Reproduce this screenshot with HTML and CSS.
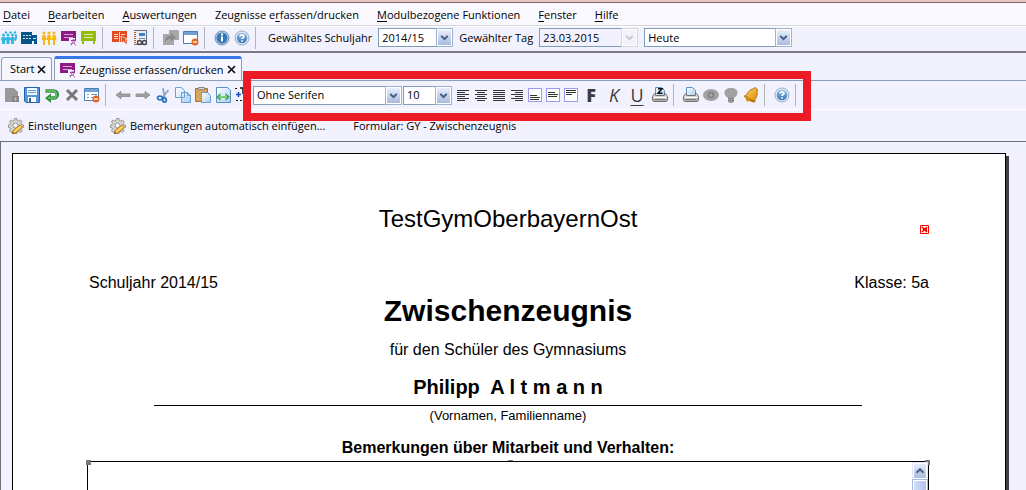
FILE: index.html
```html
<!DOCTYPE html>
<html lang="de">
<head>
<meta charset="utf-8">
<title>Zeugnisse erfassen/drucken</title>
<link rel="stylesheet" href="styles.css">
</head>
<body>
<svg class="defs" aria-hidden="true">
  <defs>
    <linearGradient id="orb" x1="0" y1="0" x2="0" y2="1"><stop offset="0" stop-color="#8db9e2"/><stop offset="1" stop-color="#3c78b8"/></linearGradient>
    <linearGradient id="gold" x1="0" y1="0" x2="1" y2="1"><stop offset="0" stop-color="#ffe070"/><stop offset="1" stop-color="#d88400"/></linearGradient>
    <linearGradient id="paper" x1="0" y1="0" x2="1" y2="1"><stop offset="0" stop-color="#fff"/><stop offset="1" stop-color="#a9cff2"/></linearGradient>
    <linearGradient id="casing" x1="0" y1="0" x2="0" y2="1"><stop offset="0" stop-color="#f2f2f2"/><stop offset="1" stop-color="#a8a8a8"/></linearGradient>
    <symbol id="people" viewBox="0 0 16 16"><circle cx="3" cy="3" r="1.500"/><circle cx="8" cy="3" r="1.500"/><circle cx="13" cy="3" r="1.500"/><path d="M1.500 5h3l1 5H4v5H2v-5H.5zM6.500 5h3l1 5H9v5H7v-5H5.500zM11.500 5h3l1 5H14v5h-2v-5h-1.500z"/></symbol>
    <symbol id="pupils" viewBox="0 0 16 16"><circle cx="2.500" cy="5" r="1.500"/><circle cx="7" cy="5" r="1.500"/><circle cx="11.500" cy="5" r="1.500"/><circle cx="5" cy="2.500" r="1.200"/><circle cx="9.500" cy="2.500" r="1.200"/><circle cx="14" cy="2.500" r="1.200"/><path d="M1 7h3l1 2-1 2v3H1v-3L0 9zM5.500 7h3l1 2-1 2v3h-3v-3l-1-2zM10 7h3l1 2-1 2v3h-3v-3L9 9zM13.500 4.500H16V8l-1 3h-1V7z"/></symbol>
    <symbol id="board" viewBox="0 0 16 16"><path fill="#8d1a85" d="M0 1h15v10H0z"/><path stroke="#d9a5d5" d="M3 4.500h9M3 7.500h9"/><path stroke="#f2f2ff" stroke-width="2" fill="none" d="M9 12V9h5"/><g fill="none" stroke="#b463ad"><circle cx="12.500" cy="11" r="1.500"/><path d="M11.500 12.500l-1.500 3M13 12.500l1.500 3M9.500 13.500h3"/></g></symbol>
    <symbol id="window" viewBox="0 0 16 16"><path fill="#fff" stroke="#4a7fb5" d="M.5 1.500h14v12H.5z"/><path fill="#6fa3d5" d="M1 2h13v3H1z"/></symbol>
    <symbol id="minus" viewBox="0 0 16 16"><circle cx="12" cy="12" r="3.500" fill="#e6651c"/><path stroke="#fff" stroke-width="1.400" d="M10 12h4"/></symbol>
    <symbol id="help" viewBox="0 0 16 16"><circle cx="8" cy="8" r="7" fill="#e1ebf6" stroke="#98acc5"/><circle cx="8" cy="8" r="5.300" fill="url(#orb)"/><path fill="none" stroke="#fff" stroke-width="1.700" d="M6 6.500c0-2.200 4-2.200 4-.2 0 1.300-2 1.200-2 2.700M8 10.300v1.500"/></symbol>
    <symbol id="printer" viewBox="0 0 16 16"><path fill="url(#paper)" stroke="#6290bd" d="M3.500 8V.5h6l3 3V8"/><path fill="url(#casing)" stroke="#707070" d="M2.500 6.500h1v2h9v-2h1l2 3v4l-1 1h-13l-1-1v-4z"/><path stroke="#fff" d="M2 10.500h12"/><path stroke="#777" d="M2.500 12.500h11"/></symbol>
    <symbol id="gear" viewBox="0 0 16 16"><path fill="#d4d4ce" stroke="#8d8d86" stroke-width=".9" d="M6.500.5h2.500l.4 2 1.300.6 1.700-1.200 1.700 1.700-1.200 1.700.6 1.300 2 .4v2.400l-2 .4-.6 1.300 1.200 1.700-1.700 1.700-1.700-1.200-1.300.6-.4 1.600H6.500l-.4-1.600-1.300-.6-1.700 1.200-1.700-1.700 1.200-1.700L2 9.800l-1.700-.4V7L2 6.600l.6-1.300-1.200-1.700 1.700-1.700 1.700 1.200 1.300-.6z"/><circle cx="7.500" cy="7.500" r="2.500" fill="#f2f2ff" stroke="#8d8d86" stroke-width=".9"/><path fill="#ffd15a" stroke="#a8651a" stroke-width=".9" d="M4.500 15.500l.8-3.200 6.700-5.300 2.300 2.500-6.600 5.400z"/><path fill="#e8a79a" d="M12 6.800l1.200-.9 2.300 2.500-1.200 1z"/><path fill="#4a3010" d="M4.300 15.700l.4-1.700 1.400 1.400z"/></symbol>
    <symbol id="down" viewBox="0 0 16 18"><path fill="none" stroke="currentColor" stroke-width="2.500" d="M4 7l4 4 4-4"/></symbol>
    <symbol id="close" viewBox="0 0 9 9"><path stroke="#111" stroke-width="1.700" d="M1 1l7 7M8 1L1 8"/></symbol>
  </defs>
</svg>

<div class="title-edge"></div>
<nav class="menu">
  <button><u>D</u>atei</button>
  <button><u>B</u>earbeiten</button>
  <button><u>A</u>uswertungen</button>
  <button>Zeugnisse e<u>r</u>fassen/drucken</button>
  <button><u>M</u>odulbezogene Funktionen</button>
  <button><u>F</u>enster</button>
  <button><u>H</u>ilfe</button>
</nav>

<div class="toolbar main-tools">
  <button class="icon" aria-label="Schüler"><svg viewBox="0 0 16 16" fill="#35b8e0"><use href="#pupils"/></svg></button>
  <button class="icon" aria-label="Schule"><svg viewBox="0 0 16 16"><path fill="#075489" d="M0 2h11v3h5v9h-3v-3h-2v3H0z"/><path stroke="#cfe0ee" stroke-dasharray="2 1" d="M2 5.500h8M2 8.500h8"/><path stroke="#cfe0ee" d="M12 8.500h3"/></svg></button>
  <button class="icon" aria-label="Klassen"><svg viewBox="0 0 16 16" fill="#f6b914"><use href="#people"/></svg></button>
  <button class="icon" aria-label="Zeugnisse"><svg><use href="#board"/></svg></button>
  <button class="icon" aria-label="Notizen"><svg viewBox="0 0 16 16"><path fill="#94bd0b" d="M0 1h15v10h-1v3h-2v-3H3v3H1v-3H0z"/><path stroke="#dcebaa" d="M3 4.500h9M3 7.500h9"/></svg></button>
  <span class="sep"></span>
  <button class="icon" aria-label="Buch"><svg viewBox="0 0 16 16"><path fill="#e34a20" d="M0 1h15v11H0z"/><path stroke="#ffd2c1" d="M2 4.500h4M2 6.500h4M2 8.500h4M9 4.500h4M7.500 2v10"/><path fill="#e34a20" stroke="#fff" stroke-width=".7" d="M9 6l6 3-2 1 2.500 3-1.500 1.500-2.500-3-1.500 2z"/></svg></button>
  <button class="icon" aria-label="Adressbuch"><svg viewBox="0 0 16 16"><path fill="#e9eef4" stroke="#637180" d="M3.500.5h11v14h-11z"/><path stroke="#c65b28" stroke-width="2" d="M3 0v15"/><path stroke="#eee" stroke-dasharray="1 1" stroke-width="3" d="M2.500 1v14"/><path fill="#3d83c8" d="M7 3h6v3H7z"/><path stroke="#6f8fac" d="M7 8.500h6"/><g fill="none" stroke="#444" stroke-width="1.300"><circle cx="7.500" cy="12.500" r="2"/><circle cx="12.500" cy="12.500" r="2"/></g></svg></button>
  <span class="sep"></span>
  <button class="icon" aria-label="Übernehmen" disabled><svg viewBox="0 0 16 16"><path fill="#a8a8a8" d="M6 0h9l1 1v9h-5v5H0V4h6z"/><path fill="#8a8a8a" d="M2 12c0-5 2-6 6-6V3l5 4.500-5 4V9c-3 0-4 1-6 3z"/></svg></button>
  <button class="icon" aria-label="Fenster schließen"><svg><use href="#window"/><use href="#minus"/></svg></button>
  <span class="sep"></span>
  <button class="icon" aria-label="Info"><svg viewBox="0 0 16 16"><circle cx="8" cy="8" r="7" fill="#b9cee4" stroke="#7090b4"/><circle cx="8" cy="8" r="5.500" fill="#3976b5"/><path stroke="#fff" stroke-width="2" d="M8 3.500v2M8 6.500v5"/></svg></button>
  <button class="icon" aria-label="Hilfe"><svg><use href="#help"/></svg></button>
  <span class="sep"></span>
  <div class="filters">
    <label for="year">Gewähltes Schuljahr</label>
    <span class="combo year"><select id="year"><option>2014/15</option></select><svg><use href="#down"/></svg></span>
    <label for="day">Gewählter Tag</label>
    <span class="combo day off"><input id="day" type="text" value="23.03.2015"><svg><use href="#down"/></svg></span>
    <span class="combo period"><select aria-label="Zeitraum"><option>Heute</option></select><svg><use href="#down"/></svg></span>
  </div>
</div>

<div class="tabs">
  <div class="tab">Start<button aria-label="Start schließen"><svg><use href="#close"/></svg></button></div>
  <div class="tab active"><svg class="tab-icon"><use href="#board"/></svg>Zeugnisse erfassen/drucken<button aria-label="Zeugnisse schließen"><svg><use href="#close"/></svg></button></div>
</div>

<div class="toolbar edit-tools">
  <button class="icon" aria-label="Neu" disabled><svg viewBox="0 0 16 16"><path fill="#999" d="M1 1h9l4 4v10H1z"/><path fill="#858585" d="M8 9h7v6H8z"/><path stroke="#bbb" d="M11.500 10v4M9.500 12h4"/></svg></button>
  <button class="icon" aria-label="Speichern"><svg viewBox="0 0 16 16"><path fill="#5796d6" stroke="#2764a8" d="M.5.5h15v15H2l-1.500-1.500z"/><path fill="#eef6ff" d="M3 1h10v7H3z"/><path stroke="#70a2d0" d="M4 3.500h8M4 5.500h8"/><path fill="#fff" d="M4 10h8v5H4z"/><path fill="#2764a8" d="M5 11h2v4H5z"/></svg></button>
  <button class="icon" aria-label="Rückgängig"><svg viewBox="0 0 16 16"><path fill="none" stroke="#2f8f40" stroke-width="3.600" d="M1.500 4h8c5 0 5 7 0 7H6"/><path fill="#2f8f40" d="M7 6.500V16l-6-5z"/><path fill="none" stroke="#6cbf70" stroke-width="1.600" d="M2.500 4h7c3.700 0 3.700 7 0 7H4"/></svg></button>
  <button class="icon" aria-label="Löschen"><svg viewBox="0 0 16 16"><path stroke="#777" stroke-width="3" d="M3 3l10 10M13 3L3 13"/></svg></button>
  <button class="icon" aria-label="Formular schließen"><svg viewBox="0 0 16 16"><use href="#window"/><path stroke="#5e95c8" d="M3 7.500h2M7 7.500h6M3 10.500h2M7 10.500h3"/><use href="#minus"/></svg></button>
  <span class="sep"></span>
  <button class="icon" aria-label="Zurück"><svg viewBox="0 0 16 16"><path fill="#a0a0a0" stroke="#888" stroke-width=".8" d="M1 8l5-3.500V7h9v2.500H6v2.300z"/></svg></button>
  <button class="icon" aria-label="Vor"><svg viewBox="0 0 16 16"><path fill="#a0a0a0" stroke="#888" stroke-width=".8" d="M15 8l-5-3.500V7H1v2.500h9v2.300z"/></svg></button>
  <button class="icon" aria-label="Ausschneiden"><svg viewBox="0 0 16 16"><path stroke="#8aa6c4" stroke-width="1.800" d="M8 1l1.500 9M13.500 3L7 11"/><g fill="none" stroke="#2c78c3" stroke-width="1.800"><ellipse cx="5" cy="11" rx="2.500" ry="1.800"/><ellipse cx="9.500" cy="13" rx="1.800" ry="2"/></g></svg></button>
  <button class="icon" aria-label="Kopieren"><svg viewBox="0 0 16 16"><path fill="url(#paper)" stroke="#6aa0d6" d="M.5.500h6l3 3v7h-9zM6.500 5.500h6l3 3v7h-9z"/><path fill="none" stroke="#6aa0d6" d="M12.500 5.500v3h3"/></svg></button>
  <button class="icon" aria-label="Einfügen"><svg viewBox="0 0 16 16"><path fill="#d9a45a" stroke="#a8703a" d="M.5 1.500h12v13H.5z"/><path fill="#ddd" stroke="#888" d="M3.500.5h6v2h-6z"/><path fill="url(#paper)" stroke="#6aa0d6" d="M6.500 5.500h6l3 3v7h-9z"/></svg></button>
  <button class="icon" aria-label="Seitenbreite"><svg viewBox="0 0 16 16"><path fill="url(#paper)" stroke="#598fc6" d="M1.500.5h11l3 3v12h-14z"/><path fill="#49a952" d="M1 10l4.500-4v3h5V6L15 10l-4.500 4v-3h-5v3z"/><path stroke="#b5eab5" d="M4 10h8"/></svg></button>
  <button class="icon" aria-label="Textfeld"><svg viewBox="0 0 16 16"><path stroke="#111" stroke-dasharray="2 2" d="M0 1.500h4M1 13.500h14"/><path stroke="#174cc2" stroke-width="1.500" d="M1 7.500h5M3.500 5v5"/><path stroke="#111" stroke-width="1.500" d="M5 1h6M8 1v6"/></svg></button>
  <div class="format">
    <span class="combo font"><select aria-label="Schriftart"><option>Ohne Serifen</option></select><svg><use href="#down"/></svg></span>
    <span class="combo size"><select aria-label="Schriftgröße"><option>10</option></select><svg><use href="#down"/></svg></span>
    <div class="aligns">
      <button aria-label="Linksbündig"><svg viewBox="0 0 14 14"><path d="M1 2.500h12M1 4.500h8M1 6.500h12M1 8.500h8M1 10.500h12M1 12.500h8"/></svg></button>
      <button aria-label="Zentriert"><svg viewBox="0 0 14 14"><path d="M1 2.500h12M3 4.500h8M1 6.500h12M3 8.500h8M1 10.500h12M3 12.500h8"/></svg></button>
      <button aria-label="Blocksatz"><svg viewBox="0 0 14 14"><path d="M1 2.500h12M1 4.500h12M1 6.500h12M1 8.500h12M1 10.500h12M1 12.500h12"/></svg></button>
      <button aria-label="Rechtsbündig"><svg viewBox="0 0 14 14"><path d="M1 2.500h12M5 4.500h8M1 6.500h12M5 8.500h8M1 10.500h12M5 12.500h8"/></svg></button>
      <button class="boxed" aria-label="Unten"><svg viewBox="0 0 14 14"><path d="M2 7.500h7M2 9.500h10M2 11.500h9"/></svg></button>
      <button class="boxed" aria-label="Mitte"><svg viewBox="0 0 14 14"><path d="M2 4.500h7M2 6.500h10M2 8.500h9"/></svg></button>
      <button class="boxed" aria-label="Oben"><svg viewBox="0 0 14 14"><path d="M2 2.500h10M2 4.500h10M2 6.500h6"/></svg></button>
    </div>
    <div class="styles">
      <button class="bold">F</button>
      <button class="italic">K</button>
      <button class="under">U</button>
      <button class="icon" aria-label="Druckzeichen"><svg viewBox="0 0 16 16"><use href="#printer"/><path fill="none" stroke="#111" stroke-width="1.500" d="M6 1.700h4L6 6.300h4.500"/></svg></button>
    </div>
  </div>
  <span class="sep"></span>
  <button class="icon" aria-label="Drucken"><svg><use href="#printer"/></svg></button>
  <button class="icon" aria-label="Vorschau" disabled><svg viewBox="0 0 16 16"><ellipse cx="8" cy="8" rx="8" ry="6" fill="#a3a3a3"/><circle cx="8" cy="8" r="3.500" fill="#858585"/><circle cx="8" cy="8" r="1.500" fill="#aaa"/></svg></button>
  <button class="icon" aria-label="Hinweis" disabled><svg viewBox="0 0 16 16"><path fill="#a0a0a0" d="M5 11C-1 7 1 1 8 1s9 6 3 10v4l-2 1H7l-2-1z"/><path stroke="#858585" d="M5 11.500h6M5 13.500h6"/></svg></button>
  <button class="icon" aria-label="Erinnerung"><svg viewBox="0 0 16 16"><path fill="url(#gold)" stroke="#b77108" d="M1 9c4 0 3-6 9-7l2-1.500 2.500 2L14 5c1 6-3 6-2 10C8 15 3 12 1 9z"/><path fill="none" stroke="#9b5b00" d="M3 9c3 3 5 4 8 5"/><circle cx="5" cy="12.500" r="2" fill="#d98b0b"/></svg></button>
  <span class="sep"></span>
  <button class="icon" aria-label="Hilfe zum Formular"><svg><use href="#help"/></svg></button>
  <span class="sep"></span>
  <div class="highlight"></div>
</div>

<div class="actions">
  <button><svg><use href="#gear"/></svg>Einstellungen</button>
  <button><svg><use href="#gear"/></svg>Bemerkungen automatisch einfügen...</button>
  <span class="form-name">Formular: GY - Zwischenzeugnis</span>
</div>

<main class="workspace">
  <article class="sheet">
    <header class="school">
      <span>TestGymOberbayernOst</span>
      <svg class="missing" viewBox="0 0 9 9" role="img" aria-label="Wappen"><path fill="#fff" stroke="#f00" d="M.5.5h8v8h-8z"/><path stroke="#f00" stroke-width="1.500" d="M2 2l5 5M7 2L2 7"/><path fill="#f00" d="M3 3h4v3H3z"/></svg>
    </header>
    <div class="meta"><span>Schuljahr 2014/15</span><span>Klasse: 5a</span></div>
    <h1>Zwischenzeugnis</h1>
    <p class="for">für den Schüler des Gymnasiums</p>
    <p class="name">Philipp&nbsp; A l t m a n n</p>
    <p class="caption">(Vornamen, Familienname)</p>
    <label class="remarks-label" for="remarks">Bemerkungen über Mitarbeit und Verhalten:</label>
    <div class="remarks">
      <textarea id="remarks"></textarea>
      <div class="scroll">
        <button aria-label="Nach oben"><svg viewBox="0 0 14 14"><path fill="none" stroke="#4d6185" stroke-width="2.500" d="M3 9l4-4 4 4"/></svg></button>
        <div class="thumb"></div>
      </div>
      <i class="handle left"></i><i class="handle mid"></i><i class="handle right"></i>
    </div>
  </article>
</main>
</body>
</html>
```
FILE: styles.css
```css
* { box-sizing: border-box; }

body {
  margin: 0;
  height: 100vh;
  overflow: hidden;
  display: flex;
  flex-direction: column;
  background: #f2f2ff;
  color: #000;
  font: 11px/16px "Open Sans", "Noto Sans", sans-serif;
}

.defs { position: absolute; width: 0; height: 0; }

button {
  margin: 0;
  padding: 0;
  border: 0;
  background: none;
  color: inherit;
  font: inherit;
}

svg { display: block; flex: none; width: 16px; height: 16px; }

.title-edge {
  flex: none;
  height: 3px;
  background: #e4c6c6;
  border-bottom: 1px solid #7b6464;
}

.menu {
  flex: none;
  display: flex;
  align-items: center;
  gap: 18px;
  height: 23px;
  padding: 2px 3px 0;
  background: #f9f9ff;
  border-bottom: 1px solid #d5d5dc;
  white-space: nowrap;
}

.menu u { text-underline-offset: 2px; }

.toolbar {
  flex: none;
  display: flex;
  align-items: center;
  gap: 4px;
  white-space: nowrap;
}

.main-tools {
  height: 27px;
  padding: 0 1px 3px;
  border-top: 1px solid #fff;
  border-bottom: 2px solid #7c7a80;
}

.icon { flex: none; width: 16px; height: 16px; }

.sep {
  flex: none;
  width: 1px;
  height: 22px;
  margin: 0 5px 0 1px;
  background: #b4b4b8;
}

.filters { display: flex; align-items: center; gap: 6px; padding-left: 3px; }

.combo {
  display: flex;
  height: 19px;
  border: 1px solid #7f9db9;
  background: #fff;
}

.combo select,
.combo input {
  appearance: none;
  flex: 1;
  min-width: 0;
  margin: 0;
  padding: 0 3px;
  border: 0;
  border-radius: 0;
  background: none;
  color: #000;
  font: inherit;
}

.combo svg {
  width: 15px;
  height: 17px;
  border: 1px solid #fff;
  outline: 1px solid #9fb2cf;
  background: linear-gradient(#e9eefb, #a9bbe0);
  color: #405a80;
}

.combo.off { background: #f2f2ff; }
.combo.off svg { background: #f2f2f8; color: #c8c8d0; outline-color: #d5d5e0; }

.year { width: 75px; }
.day { width: 99px; }
.period { width: 148px; }
.font { width: 149px; }
.size { width: 49px; }

.tabs {
  flex: none;
  display: flex;
  align-items: flex-end;
  gap: 2px;
  height: 28px;
  padding-left: 1px;
  border-bottom: 1px solid #8ba0b8;
  white-space: nowrap;
}

.tab {
  display: flex;
  align-items: center;
  gap: 3px;
  height: 23px;
  padding: 0 5px 0 8px;
  border: 1px solid #8ba0b8;
  border-bottom: 0;
  border-radius: 3px 3px 0 0;
  background: #f6f6ff;
}

.tab.active { padding-left: 5px; height: 24px; border-top: 3px solid #3778e8; }
.tab button svg { width: 9px; height: 9px; }

.edit-tools {
  position: relative;
  height: 29px;
  padding: 0 4px;
  border-bottom: 1px solid #fff;
}

.format { display: flex; align-items: center; gap: 4px; margin-left: -2px; }
.font { margin-right: -3px; }

.aligns { display: flex; gap: 4px; padding-right: 1px; }
.aligns svg { width: 14px; height: 14px; stroke: #333; }
.boxed { background: #fff; box-shadow: 0 0 0 1px #9a9af5 inset; }

.styles { display: flex; align-items: center; gap: 7px; color: #3c3c3c; font-size: 18px; line-height: 20px; }
.styles button { width: 16px; }
.styles .bold { font-weight: 800; }
.styles .italic { font-style: italic; }
.styles .under { text-decoration: underline; text-underline-offset: 3px; text-decoration-thickness: 1px; }

.highlight {
  position: absolute;
  top: -10px;
  bottom: -12px;
  left: 243px;
  width: 568px;
  border: 8px solid #ed1c24;
  pointer-events: none;
}

.actions {
  flex: none;
  display: flex;
  align-items: center;
  gap: 13px;
  height: 31px;
  padding: 0 8px;
  white-space: nowrap;
}

.actions button { display: flex; align-items: center; gap: 4px; }
.form-name { padding-left: 15px; }

.workspace {
  flex: 1;
  min-height: 0;
  padding: 11px 20px 0 11px;
  border-top: 1px solid #707078;
  border-left: 1px solid #707078;
  overflow: hidden;
}

.sheet {
  min-height: 520px;
  padding: 50px 76px 0 74px;
  border: 1px solid #000;
  background: #fff;
  box-shadow: 3px 3px 0 #404040;
  font: 16px/20px "Liberation Sans", Arial, sans-serif;
  text-align: center;
}

.sheet p, .sheet h1 { margin: 0; }

.school {
  display: grid;
  grid-template-columns: 1fr auto 1fr;
  align-items: end;
  font-size: 24px;
  line-height: 30px;
}
.school span { grid-column: 2; }
.missing { justify-self: end; width: 9px; height: 9px; }

.meta { display: flex; justify-content: space-between; padding: 39px 0 0 2px; }

.sheet h1 { font-size: 30px; line-height: 36px; }
.sheet .for { padding-top: 11px; }
.sheet .name { margin: 0 67px; padding: 14px 0 5px; border-bottom: 1px solid #000; font-size: 20px; font-weight: bold; line-height: 26px; }
.caption { font-size: 13px; }
.remarks-label { display: block; padding-top: 12px; font-weight: bold; }

.remarks {
  position: relative;
  z-index: 0;
  display: flex;
  height: 160px;
  margin-top: 3px;
  border: 1px solid #000;
}

.remarks textarea { flex: 1; border: 0; resize: none; background: none; }
.scroll { width: 16px; padding: 1px; background: #dce5fb; }
.scroll button { display: block; width: 14px; height: 16px; border: 1px solid #fff; background: linear-gradient(#e9eefb, #a9bbe0); }
.scroll button svg { width: 12px; height: 14px; }
.thumb { height: 60px; margin-top: 1px; border: 1px solid #fff; outline: 1px solid #a9b9df; background: linear-gradient(90deg, #d2defc, #b2c3ea); }

.handle { position: absolute; top: -2px; width: 5px; height: 5px; background: #777; z-index: -1; }
.handle.left { left: -2px; }
.handle.right { right: -2px; }
.handle.mid { left: 50%; height: 1px; }
```
